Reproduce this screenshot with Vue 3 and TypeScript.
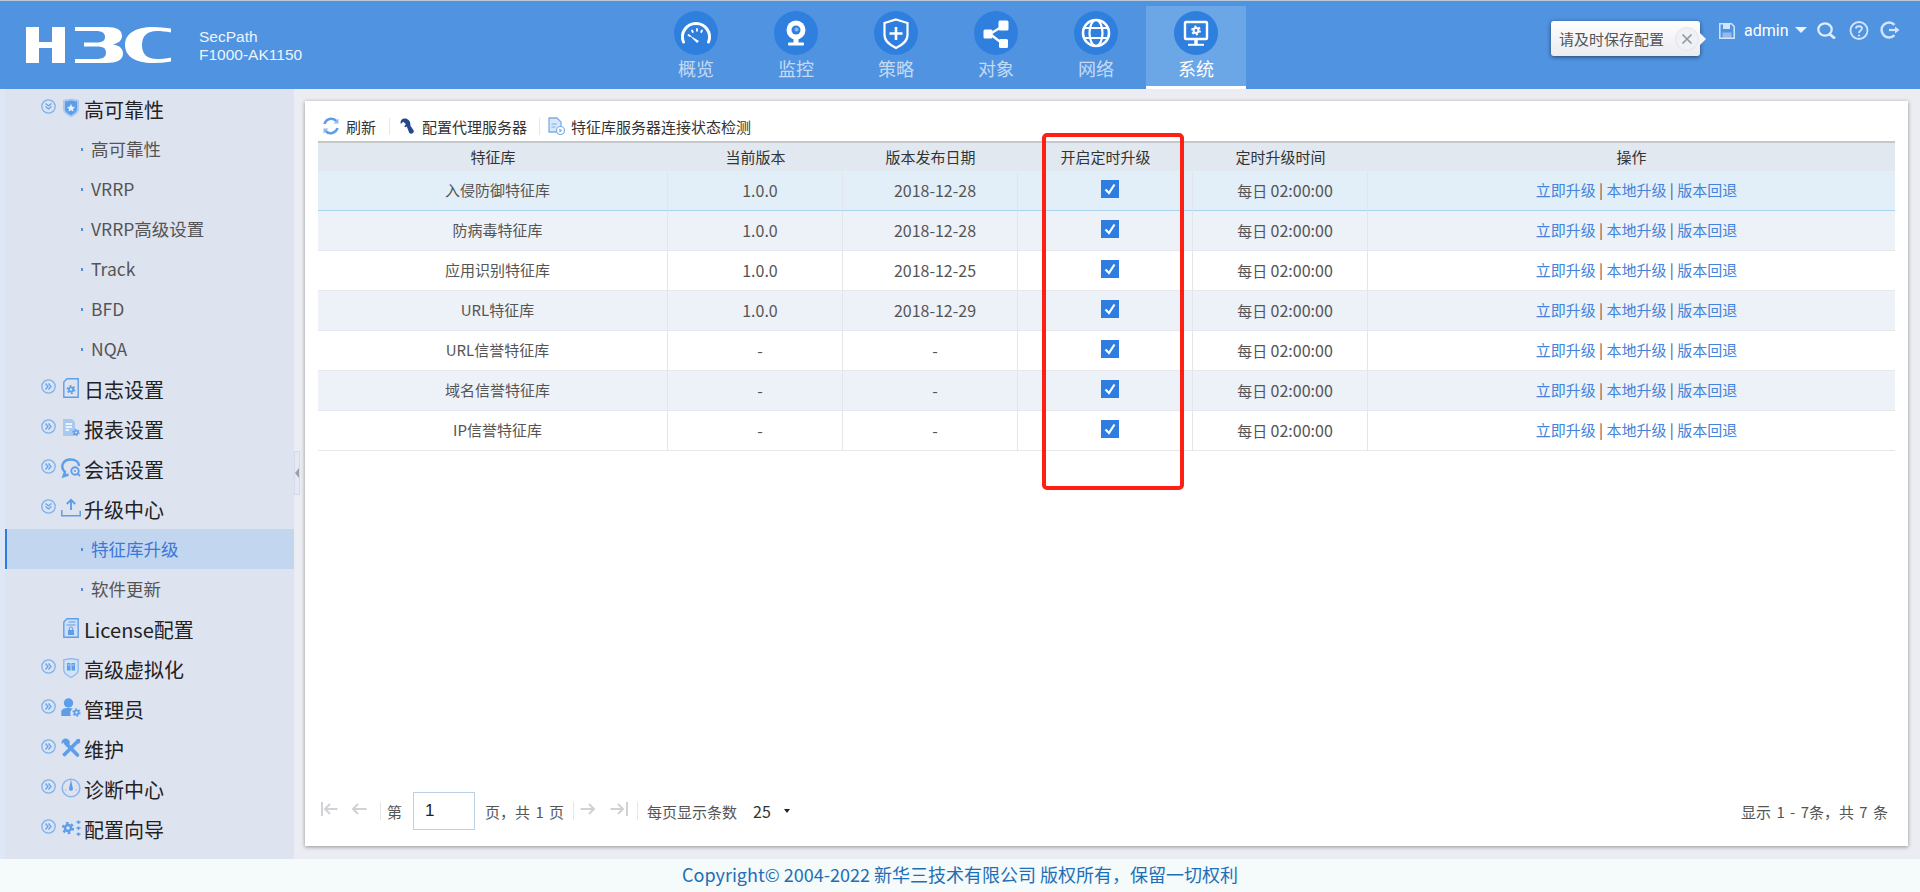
<script setup lang="ts">
interface NavItem { label: string; icon: string; active?: boolean }
interface MenuItem { label: string; level: 1 | 2; icon?: string; state?: 'open' | 'closed' | 'none'; active?: boolean }
interface Row { name: string; version: string; date: string }

const nav: NavItem[] = [
  { label: '概览', icon: 'gauge' },
  { label: '监控', icon: 'cam' },
  { label: '策略', icon: 'shield' },
  { label: '对象', icon: 'share' },
  { label: '网络', icon: 'globe' },
  { label: '系统', icon: 'monitor', active: true },
]

const menu: MenuItem[] = [
  { label: '高可靠性', level: 1, icon: 'ha', state: 'open' },
  { label: '高可靠性', level: 2 },
  { label: 'VRRP', level: 2 },
  { label: 'VRRP高级设置', level: 2 },
  { label: 'Track', level: 2 },
  { label: 'BFD', level: 2 },
  { label: 'NQA', level: 2 },
  { label: '日志设置', level: 1, icon: 'log', state: 'closed' },
  { label: '报表设置', level: 1, icon: 'report', state: 'closed' },
  { label: '会话设置', level: 1, icon: 'session', state: 'closed' },
  { label: '升级中心', level: 1, icon: 'upload', state: 'open' },
  { label: '特征库升级', level: 2, active: true },
  { label: '软件更新', level: 2 },
  { label: 'License配置', level: 1, icon: 'license', state: 'none' },
  { label: '高级虚拟化', level: 1, icon: 'virt', state: 'closed' },
  { label: '管理员', level: 1, icon: 'admin', state: 'closed' },
  { label: '维护', level: 1, icon: 'tools', state: 'closed' },
  { label: '诊断中心', level: 1, icon: 'diag', state: 'closed' },
  { label: '配置向导', level: 1, icon: 'wizard', state: 'closed' },
]

const rows: Row[] = [
  { name: '入侵防御特征库', version: '1.0.0', date: '2018-12-28' },
  { name: '防病毒特征库', version: '1.0.0', date: '2018-12-28' },
  { name: '应用识别特征库', version: '1.0.0', date: '2018-12-25' },
  { name: 'URL特征库', version: '1.0.0', date: '2018-12-29' },
  { name: 'URL信誉特征库', version: '-', date: '-' },
  { name: '域名信誉特征库', version: '-', date: '-' },
  { name: 'IP信誉特征库', version: '-', date: '-' },
]

const gear = (x: number, y: number, r: number, c: string) =>
  `<circle cx="${x}" cy="${y}" r="${r * 0.6}" fill="none" stroke="${c}" stroke-width="${r * 0.5}"/><circle cx="${x}" cy="${y}" r="${r}" fill="none" stroke="${c}" stroke-width="${r * 0.45}" stroke-dasharray="${r * 0.52} ${r * 0.527}"/>`

const navIcons: Record<string, string> = {
  gauge: `<path d="M9.5 31 A13.5 13.5 0 1 1 34.500 31" fill="none" stroke="#fff" stroke-width="3" stroke-linecap="round"/><path d="M14.500 24 l1.500 1 M18 19.500 l.8 1.500 M23 18 v1.800 M28 19.500 l-.8 1.500" stroke="#fff" stroke-width="1.800" stroke-linecap="round"/><path d="M15 24 L25 30 L23 32 Z" fill="#fff"/>`,
  cam: `<circle cx="22" cy="19" r="9.500" fill="#fff"/><circle cx="22" cy="19" r="4.500" fill="#2f7fdf"/><circle cx="22.500" cy="18.500" r="2" fill="#fff" fill-opacity=".45"/><rect x="19.500" y="28" width="5" height="4" fill="#fff"/><rect x="14" y="31.500" width="16" height="3" rx="1" fill="#fff"/>`,
  shield: `<path d="M22 8.500 L33.500 12 V24 C33.500 31 27 34.500 22 37 C17 34.500 10.500 31 10.500 24 V12 Z" fill="#2f7fdf" stroke="#fff" stroke-width="2.200"/><path d="M22 16 V29 M15.500 22.500 H28.500" stroke="#fff" stroke-width="2.600"/>`,
  share: `<path d="M16 23 L29 15 M16 23 L29 33" stroke="#fff" stroke-width="2.400"/><rect x="9.500" y="18.500" width="9" height="9" rx="1.500" fill="#fff"/><rect x="24.500" y="9.500" width="10" height="10" rx="1.500" fill="#fff"/><rect x="25" y="28" width="9" height="9" rx="1.500" fill="#fff"/>`,
  globe: `<circle cx="22" cy="22" r="13" fill="none" stroke="#fff" stroke-width="2.600"/><ellipse cx="22" cy="22" rx="6.500" ry="13" fill="none" stroke="#fff" stroke-width="2.200"/><path d="M10.500 17 H33.500 M10.500 27 H33.500" stroke="#fff" stroke-width="2.200"/>`,
  monitor: `<rect x="11" y="11" width="22" height="17" rx="1" fill="none" stroke="#fff" stroke-width="2.400"/><path d="M22 29 V33" stroke="#fff" stroke-width="3.500"/><path d="M14 33.800 H30" stroke="#fff" stroke-width="2"/>` + gear(22, 19.500, 4, '#fff'),
}

const b = '#5e9ee8'
const menuIcons: Record<string, string> = {
  ha: `<path d="M2 2 L10 0.500 L18 2 V11 C18 15 13 17.500 10 19.500 C7 17.500 2 15 2 11 Z" fill="#a9c9f0"/><path d="M4 3.500 L10 2.500 L16 3.500 V11 C16 14 12.500 15.800 10 17.200 C7.500 15.800 4 14 4 11 Z" fill="${b}"/><path d="M10 6 L11.300 8.800 L14 9.100 L12 11 L12.500 13.600 L10 12.300 L7.500 13.600 L8 11 L6 9.100 L8.700 8.800 Z" fill="#e8f0fb"/>`,
  log: `<path d="M6 .8 H17.200 V19.200 H2.800 V4 Z" fill="none" stroke="${b}" stroke-width="1.400"/>` + gear(10, 11.500, 3.600, b),
  report: `<path d="M2 1 H11 L14 4 V18 H2 Z" fill="#a9c9f0"/><path d="M4.500 6 H11 M4.500 9 H11 M4.500 12 H8" stroke="#fff" stroke-width="1.300"/>` + gear(15, 14.500, 3, b),
  session: `<path d="M7.500 16.500 L2.500 18.300 L4 14 C-1.500 9 2 1.500 9.500 1.500 C15 1.500 18 4.500 18 8" fill="none" stroke="${b}" stroke-width="2.400"/><circle cx="14" cy="13" r="3.700" fill="none" stroke="${b}" stroke-width="1.900"/><circle cx="14" cy="13" r="1" fill="${b}"/><path d="M16.500 15.500 L19 18" stroke="${b}" stroke-width="1.800"/>`,
  upload: `<path d="M10 12 V2 M5.800 6 L10 1.800 L14.200 6" fill="none" stroke="${b}" stroke-width="1.900"/><path d="M.8 12 V17.800 H19.200 V12.800" fill="none" stroke="${b}" stroke-width="1.500"/>`,
  license: `<path d="M6 .8 H17.200 V19.200 H2.800 V4 Z" fill="#cfe0f6" stroke="${b}" stroke-width="1.400"/><path d="M7.500 4 H14.500 M5.500 7 H14.500" stroke="${b}" stroke-width="1.200"/><rect x="7" y="12" width="6" height="5" fill="${b}"/><circle cx="10" cy="10.800" r="1.800" fill="none" stroke="${b}" stroke-width="1"/>`,
  virt: `<path d="M2.800 1.800 L10 .5 L17.200 1.800 V12 C17.200 15.500 13 18 10 19.500 C7 18 2.800 15.500 2.800 12 Z" fill="#d3e3f7" stroke="#8db8ec" stroke-width="1.300"/><rect x="6" y="5" width="3.500" height="7.500" fill="${b}"/><rect x="10.500" y="5" width="3.500" height="7.500" fill="${b}"/><path d="M6.800 7 H8.700 M11.300 7 H13.200" stroke="#d3e3f7" stroke-width="1"/>`,
  admin: `<circle cx="7.500" cy="5" r="4.700" fill="${b}"/><path d="M.3 18 V14 C.3 11.500 2.500 10 7.500 10 C9.500 10 11 10.300 12 10.800 C9.500 12 8.500 15 10 18 Z" fill="${b}"/>` + gear(15.500, 14.500, 3.400, b),
  tools: `<path d="M4.500 5 L16.500 17" stroke="${b}" stroke-width="3.600" stroke-linecap="round"/><path d="M4 .6 C1.500 1 0 3.500 .8 6 L3.300 4 L5.600 5.800 L4.300 8.300 C6.800 9 9.200 6.800 8.800 4 C8.400 2 6.300 .3 4 .6 Z" fill="${b}"/><path d="M17 3 L3.500 16.500" stroke="${b}" stroke-width="3.800" stroke-linecap="round"/><path d="M15 1.800 L18.800 .8 L19.300 4.500 L17 6 Z" fill="${b}"/>`,
  diag: `<circle cx="10" cy="10" r="8.800" fill="none" stroke="#8db8ec" stroke-width="1.600"/><path d="M10 1.500 L11.800 10 A2 2 0 1 1 8.200 10 Z" fill="${b}"/><path d="M4 12 H5.500 M14.500 12 H16" stroke="#8db8ec" stroke-width="1.200"/>`,
  wizard: gear(7, 10, 5, b) + `<path d="M15.500 4 H19.500 M15.500 10 H19.500 M15.500 16 H19.500" stroke="${b}" stroke-width="1.400"/><path d="M17.500 2.500 V6 M17.500 8.500 V12 M17.500 14.500 V18" stroke="${b}" stroke-width="1.400"/>`,
}
</script>

<template>
  <div class="app">
    <header class="top">
      <svg class="logo" viewBox="0 0 145 36">
        <path fill="#fff" d="M0 0H13V15H26V0H39V36H26V21H13V36H0Z" />
        <path fill="#fff" d="M49 0H80C91 0 96 3 96 9C96 13 93 16 87 17.500C94 18.500 97 22 97 26.500C97 33 91 36 80 36H49V32H70C77 32 80 30 80 25.500C80 21 77 19.500 70 19.500H58V15.500H70C76 15.500 79 14 79 10C79 6 76 4 70 4H49Z" />
        <path fill="#fff" d="M145 1.500C139 .5 133 0 127 0C109 0 99 7 99 18C99 29 109 36 127 36C133 36 139 35.500 145 34.500V30.500C140 31.500 135 32 131 32C121 32 116 27 116 18C116 9 121 4 131 4C135 4 140 4.500 145 5.500Z" />
      </svg>
      <div class="brand">
        <span>SecPath</span>
        <span>F1000-AK1150</span>
      </div>
      <nav class="nav">
        <a v-for="n in nav" :key="n.label" class="nav-item" :class="{ active: n.active }">
          <svg class="nav-icon" viewBox="0 0 44 44">
            <circle cx="22" cy="22" r="22" fill="#2f7fdf" />
            <g v-html="navIcons[n.icon]"></g>
          </svg>
          <span>{{ n.label }}</span>
        </a>
      </nav>
      <div class="tools">
        <div class="tip">
          <span>请及时保存配置</span>
          <span class="tip-close">
            <svg viewBox="0 0 12 12" width="12" height="12"><path d="M1.500 1.500L10.500 10.500M10.500 1.500L1.500 10.500" stroke="#8e97a3" stroke-width="1.600" /></svg>
          </span>
        </div>
        <svg class="save" viewBox="0 0 16 16" width="16" height="16">
          <path d="M.8 .8H12.500L15.200 3.500V15.200H.8Z" fill="none" stroke="#d3e5fa" stroke-width="1.500" />
          <rect x="4" y="1" width="7" height="5" fill="#d3e5fa" />
          <rect x="3.500" y="9.500" width="9" height="5.500" fill="#d3e5fa" fill-opacity=".5" />
        </svg>
        <span class="user">admin</span>
        <span class="caret"></span>
        <svg class="search" viewBox="0 0 19 17" width="19" height="17">
          <ellipse cx="8" cy="7.500" rx="6.700" ry="6.200" fill="none" stroke="#e2eefc" stroke-width="2.200" />
          <path d="M12.500 12L18 16.500" stroke="#e2eefc" stroke-width="2.800" />
        </svg>
        <svg class="help" viewBox="0 0 20 19" width="20" height="19">
          <circle cx="10" cy="9.500" r="8.500" fill="none" stroke="#d3e5fa" stroke-width="1.800" />
          <path d="M7 7.500C7 4.500 13 4.500 13 7.500C13 9.500 10 9.500 10 12" fill="none" stroke="#d3e5fa" stroke-width="1.800" />
          <circle cx="10" cy="14.500" r="1.100" fill="#d3e5fa" />
        </svg>
        <svg class="power" viewBox="0 0 20 18" width="20" height="18">
          <path d="M14.500 3.800A7.500 7.500 0 1 0 14.500 14.200" fill="none" stroke="#d3e5fa" stroke-width="2.500" />
          <path d="M9 9H16" stroke="#d3e5fa" stroke-width="2.200" />
          <path d="M15 5.500L19.500 9L15 12.500Z" fill="#d3e5fa" />
        </svg>
      </div>
    </header>

    <div class="body">
      <aside class="side">
        <ul class="menu">
          <li
            v-for="(m, i) in menu"
            :key="i"
            class="menu-row"
            :class="[m.level === 1 ? 'l1' : 'l2', { active: m.active }]"
          >
            <template v-if="m.level === 1">
              <span class="toggle">
                <svg v-if="m.state !== 'none'" viewBox="0 0 15 15" width="15" height="15">
                  <circle cx="7.500" cy="7.500" r="6.700" fill="#d7e4f6" stroke="#7fb0ea" stroke-width="1.300" />
                  <path
                    v-if="m.state === 'closed'"
                    d="M4.500 4.500L7 7.500L4.500 10.500M7.500 4.500L10 7.500L7.500 10.500"
                    fill="none"
                    stroke="#6ca3e6"
                    stroke-width="1.300"
                  />
                  <path
                    v-else
                    d="M4.500 4.500L7.500 7L10.500 4.500M4.500 7.500L7.500 10L10.500 7.500"
                    fill="none"
                    stroke="#6ca3e6"
                    stroke-width="1.300"
                  />
                </svg>
              </span>
              <svg class="menu-icon" viewBox="0 0 20 20" width="20" height="20" v-html="menuIcons[m.icon || '']"></svg>
            </template>
            <i v-else class="dot"></i>
            <span class="menu-label">{{ m.label }}</span>
          </li>
        </ul>
      </aside>

      <main class="main">
        <div class="grip"><i></i></div>
        <section class="card">
          <div class="toolbar">
            <span class="tb-btn">
              <svg viewBox="0 0 18 18" width="18" height="18">
                <path d="M2.500 7A7 7 0 0 1 14.500 4.200" fill="none" stroke="#5d9ce6" stroke-width="2.500" />
                <path d="M15.500 11A7 7 0 0 1 3.500 13.800" fill="none" stroke="#5d9ce6" stroke-width="2.500" />
                <path d="M16.500 1.500V6.500H11.500ZM1.500 16.500V11.500H6.500Z" fill="#8fbcf0" />
              </svg>
              刷新
            </span>
            <i class="tb-sep"></i>
            <span class="tb-btn">
              <svg viewBox="0 0 14 16" width="14" height="16">
                <path d="M4 .5C1.500 .8 0 3.300 .8 6L3.200 3.800L5.800 6L4.300 8.800L5.300 9.200L6.800 8.600L9.200 14.700C10.500 16.700 14.500 15.300 13.700 12.500L10.300 7.500C11 3.500 8 0 4 .5Z" fill="#27468f" />
              </svg>
              配置代理服务器
            </span>
            <i class="tb-sep"></i>
            <span class="tb-btn">
              <svg viewBox="0 0 17 18" width="17" height="18">
                <path d="M1 1H9L13 5V15H1Z" fill="#d9e7f9" stroke="#7aaeea" stroke-width="1.300" />
                <path d="M3.500 7H9M3.500 10H7.500" stroke="#7aaeea" stroke-width="1.200" />
                <circle cx="12.500" cy="13.500" r="4" fill="#fff" stroke="#7aaeea" stroke-width="1.200" />
                <path d="M11.300 11.500L14.300 13.500L11.300 15.500Z" fill="#7aaeea" />
              </svg>
              特征库服务器连接状态检测
            </span>
          </div>

          <table class="grid">
            <colgroup>
              <col class="c-name" />
              <col class="c-mid" />
              <col class="c-mid" />
              <col class="c-mid" />
              <col class="c-mid" />
              <col />
            </colgroup>
            <thead>
              <tr>
                <th>特征库</th>
                <th>当前版本</th>
                <th>版本发布日期</th>
                <th>开启定时升级</th>
                <th>定时升级时间</th>
                <th>操作</th>
              </tr>
            </thead>
            <tbody>
              <tr v-for="(r, i) in rows" :key="r.name" :class="{ hot: i === 0, alt: i % 2 === 1 }">
                <td>{{ r.name }}</td>
                <td class="num">{{ r.version }}</td>
                <td class="num">{{ r.date }}</td>
                <td class="chk">
                  <svg viewBox="0 0 18 18" width="18" height="18">
                    <rect width="18" height="18" fill="#2f7de1" />
                    <path d="M4.500 9.500L8 13L13.500 4.500" fill="none" stroke="#fff" stroke-width="2.200" />
                  </svg>
                </td>
                <td>每日 <span class="num">02:00:00</span></td>
                <td class="ops">
                  <a>立即升级</a> | <a>本地升级</a> | <a>版本回退</a>
                </td>
              </tr>
            </tbody>
          </table>

          <div class="pager">
            <svg class="pg-first" viewBox="0 0 17 14" width="17" height="14"><path d="M1 0V14M16.500 7H4M9 2L4 7L9 12" fill="none" stroke="#d0d2d6" stroke-width="2" /></svg>
            <svg class="pg-prev" viewBox="0 0 16 14" width="16" height="14"><path d="M15.500 7H2M7 2L2 7L7 12" fill="none" stroke="#d0d2d6" stroke-width="2" /></svg>
            <i class="pg-sep s1"></i>
            <span class="pg-no">第</span>
            <span class="pg-input">1</span>
            <span class="pg-total">页，共 1 页</span>
            <i class="pg-sep s2"></i>
            <svg class="pg-next" viewBox="0 0 16 14" width="16" height="14"><path d="M.5 7H14M9 2L14 7L9 12" fill="none" stroke="#d0d2d6" stroke-width="2" /></svg>
            <svg class="pg-last" viewBox="0 0 18 14" width="18" height="14"><path d="M17 0V14M.5 7H13M8 2L13 7L8 12" fill="none" stroke="#d0d2d6" stroke-width="2" /></svg>
            <i class="pg-sep s3"></i>
            <span class="pg-size">每页显示条数</span>
            <span class="pg-val">25</span>
            <i class="pg-caret"></i>
            <span class="pg-info">显示 1 - 7条，共 7 条</span>
          </div>
        </section>
      </main>
    </div>

    <footer class="foot">Copyright© 2004-2022 新华三技术有限公司 版权所有，保留一切权利</footer>
    <div class="mark"></div>
  </div>
</template>

<style>
html, body { margin: 0; padding: 0; background: #ecedf2; overflow: hidden; }
</style>

<style scoped>
.app {
  position: relative;
  display: flex;
  flex-direction: column;
  width: 1920px;
  height: 892px;
  overflow: hidden;
  font-family: "Noto Sans CJK SC", "Liberation Sans", sans-serif;
  color: #333;
}

/* header */
.top {
  position: relative;
  display: flex;
  flex: none;
  height: 88px;
  border-top: 1px solid #b9c9dc;
  background: #5093e1;
}
.logo { flex: none; width: 145px; height: 36px; margin: 26px 0 0 26px; }
.brand {
  display: flex;
  flex: none;
  flex-direction: column;
  width: 447px;
  margin: 27px 0 0 28px;
  font: 15.500px/18px "Liberation Sans", sans-serif;
  color: #edf3fb;
}
.nav { display: flex; flex: none; padding-top: 5px; }
.nav-item {
  display: flex;
  flex-direction: column;
  align-items: center;
  width: 100px;
  height: 83px;
  box-sizing: border-box;
  padding-top: 5px;
  font-size: 18px;
  line-height: 26px;
  color: rgba(255, 255, 255, 0.68);
}
.nav-item.active {
  border-bottom: 3px solid #fff;
  background: #6ba6e7;
  color: #fff;
}
.nav-icon { flex: none; width: 44px; height: 44px; margin-bottom: 0; }
.tools { display: flex; flex: 1; align-items: flex-start; position: relative; }
.tip {
  position: absolute;
  top: 20px;
  left: 305px;
  display: flex;
  align-items: center;
  box-sizing: border-box;
  width: 149px;
  height: 35px;
  padding-left: 8px;
  border-radius: 3px;
  background: linear-gradient(#ffffff, #ebebf1);
  box-shadow: 0 1px 4px rgba(0, 0, 0, 0.55);
  font-size: 15px;
  color: #555;
}
.tip::after {
  content: "";
  position: absolute;
  top: 12px;
  right: -6px;
  border-left: 6px solid #f6f6f9;
  border-top: 6px solid transparent;
  border-bottom: 6px solid transparent;
}
.tip-close {
  display: flex;
  align-items: center;
  justify-content: center;
  width: 22px;
  height: 22px;
  margin-left: 11px;
  border: 1px solid #e4e5ea;
  border-radius: 50%;
  background: #f0f1f5;
}
.save { margin: 22px 0 0 473px; }
.user {
  margin: 18px 0 0 9px;
  font: 16px/24px Roboto, sans-serif;
  color: #fff;
}
.caret {
  width: 0;
  height: 0;
  margin: 26px 0 0 7px;
  border-top: 6px solid #eaf2fc;
  border-left: 6px solid transparent;
  border-right: 6px solid transparent;
}
.search { margin: 21px 0 0 10px; }
.help { margin: 20px 0 0 13px; }
.power { margin: 20px 0 0 11px; }

/* sidebar */
.body { display: flex; flex: 1; min-height: 0; }
.side {
  flex: none;
  width: 289px;
  padding-left: 5px;
  background: #dee3f0;
  box-shadow: inset 5px 0 0 #dde7f6;
}
.menu { margin: 0; padding: 0; list-style: none; }
.menu-row { display: flex; align-items: center; height: 40px; }
.toggle { display: flex; flex: none; width: 15px; height: 15px; margin: -6px 0 0 35.5px; }
.menu-icon { flex: none; margin: 0 0 2px 5.5px; }
.l1 .menu-label { margin-left: 3px; font-size: 20px; color: #222; }
.l2 .menu-label { margin-top: -2px; font-size: 17.500px; color: #555; }
.dot { flex: none; width: 2px; height: 3px; margin: 0 8px 0 76px; background: #4a8fe0; }
.menu-row.active { background: #c2d6ef; box-shadow: inset 2px 0 0 #2f7de1; }
.menu-row.active .menu-label { color: #3c78d8; }

/* main */
.main {
  position: relative;
  display: flex;
  flex: 1;
  min-width: 0;
  padding: 12px 12px 13px 11px;
  background: #ecedf2;
}
.grip {
  position: absolute;
  top: 362px;
  left: 0;
  display: flex;
  align-items: center;
  box-sizing: border-box;
  width: 6px;
  height: 44px;
  border: 1px solid #d5daea;
  background: #e6e9f3;
}
.grip i {
  width: 0;
  height: 0;
  border-right: 4px solid #9ba1aa;
  border-top: 5px solid transparent;
  border-bottom: 5px solid transparent;
}
.card {
  display: flex;
  flex: 1;
  flex-direction: column;
  min-width: 0;
  padding: 0 13px;
  background: #fff;
  box-shadow: 0 1px 4px rgba(0, 0, 0, 0.4);
}
.toolbar {
  display: flex;
  flex: none;
  align-items: center;
  box-sizing: border-box;
  height: 40px;
  padding: 10px 0 0 4px;
  font-size: 15px;
  color: #333;
}
.tb-btn { display: flex; align-items: center; gap: 6px; }
.tb-btn:nth-child(3) { gap: 8px; }
.tb-sep { width: 1px; height: 17px; margin: 0 10px 0 13px; background: #e4e6ea; }
.tb-sep + .tb-btn + .tb-sep { margin-left: 12px; margin-right: 8px; }

.grid {
  flex: none;
  width: 100%;
  table-layout: fixed;
  border-collapse: separate;
  border-spacing: 0;
  font-size: 15px;
}
.c-name { width: 350px; }
.c-mid { width: 175px; }
.grid th {
  box-sizing: border-box;
  height: 30px;
  padding: 0 0 2px;
  border-top: 2px solid #c4c8cc;
  background: #e1e8ef;
  font-weight: 400;
  color: #333;
}
.grid td {
  box-sizing: border-box;
  height: 40px;
  padding: 0 0 2px 10px;
  border-right: 1px solid #e2e5ea;
  border-bottom: 1px solid #e6e8ec;
  text-align: center;
  color: #555;
}
.grid td:last-child { border-right: 0; }
.grid tr.alt td { background: #edf1f8; }
.grid tr.hot td { background: #e2eff8; border-bottom-color: #a9d3f0; }
.grid td.num, .grid td .num { font-size: 16px; }
.grid td.chk { padding: 0; }
.chk svg { display: block; margin: -3px auto 0; position: relative; left: 5px; }
.ops { color: #4a7fd0; }
.ops a { color: #4483dc; }

.pager {
  display: flex;
  flex: none;
  align-items: center;
  margin-top: auto;
  height: 70px;
  font-size: 15px;
  color: #555;
}
.pager svg { margin-top: -5px; }
.pg-first { margin-left: 3px; }
.pg-prev { margin-left: 13px; }
.pg-sep { width: 1px; height: 18px; background: #e4e6ea; }
.s1 { margin-left: 13px; }
.pg-no { margin-left: 6px; }
.pg-input {
  box-sizing: border-box;
  width: 62px;
  height: 38px;
  margin-left: 11px;
  padding-left: 11px;
  border: 1px solid #bcd0e6;
  font: 17px/36px "Liberation Sans", sans-serif;
  color: #222;
}
.pg-total { margin-left: 10px; word-spacing: 2px; }
.s2 { margin-left: 9px; }
.pg-next { margin-left: 6px; }
.pg-last { margin-left: 14px; }
.s3 { margin-left: 9px; }
.pg-size { margin-left: 9px; }
.pg-val { margin-left: 16px; color: #333; font-size: 16px; }
.pg-caret {
  width: 0;
  height: 0;
  margin-left: 13px;
  border-top: 4px solid #222;
  border-left: 3.500px solid transparent;
  border-right: 3.500px solid transparent;
}
.pg-info { margin-left: auto; margin-right: 7px; word-spacing: 2px; }

.foot {
  flex: none;
  height: 33px;
  background: #f5fafa;
  text-align: center;
  font-size: 18px;
  line-height: 31px;
  color: #1d6fb8;
}

/* annotation drawn over the screenshot */
.mark {
  position: absolute;
  top: 133px;
  left: 1042px;
  box-sizing: border-box;
  width: 142px;
  height: 357px;
  border: 4px solid #ff2015;
  border-radius: 5px;
  pointer-events: none;
}
</style>
